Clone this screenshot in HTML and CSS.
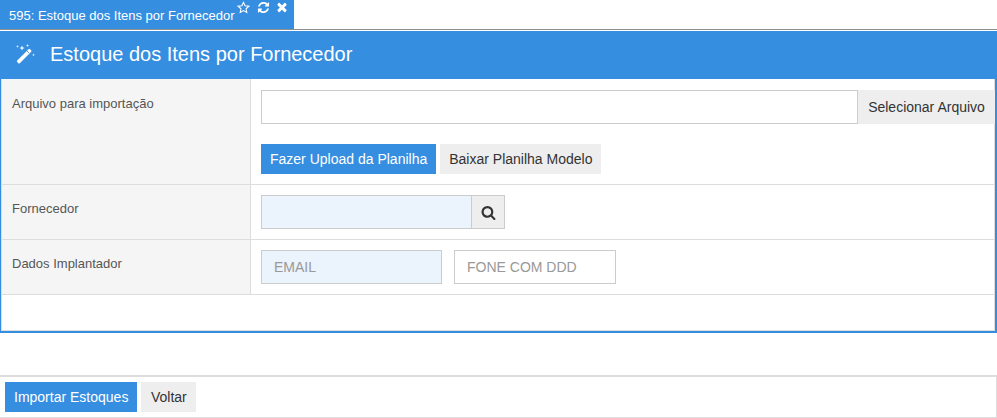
FILE: index.html

```html
<!DOCTYPE html>
<html lang="pt-BR">
<head>
<meta charset="UTF-8">
<title>Estoque dos Itens por Fornecedor</title>
<link rel="stylesheet" href="styles.css">
</head>
<body>
  <div class="tabs">
    <div class="tab">
      <span class="tab-title">595: Estoque dos Itens por Fornecedor</span>
      <svg class="tab-icon star" viewBox="0 0 24 24"><polygon points="12,2.5 14.9,8.9 21.8,9.7 16.7,14.4 18.1,21.3 12,17.8 5.9,21.3 7.3,14.4 2.2,9.7 9.1,8.9"/></svg>
      <svg class="tab-icon" viewBox="0 0 1792 1792"><path d="M1639 1056q0 5-1 7-64 268-268 434.5t-478 166.5q-146 0-282.5-55t-243.5-157l-129 129q-19 19-45 19t-45-19-19-45v-448q0-26 19-45t45-19h448q26 0 45 19t19 45-19 45l-137 137q71 66 161 102t187 36q134 0 250-65t186-179q11-17 53-117 8-23 30-23h192q13 0 22.5 9.5t9.5 22.5zm25-800v448q0 26-19 45t-45 19h-448q-26 0-45-19t-19-45 19-45l138-138q-148-137-349-137-134 0-250 65t-186 179q-11 17-53 117-8 23-30 23h-199q-13 0-22.5-9.5t-9.5-22.5v-7q65-268 270-434.5t480-166.5q146 0 284 55.5t245 156.5l130-129q19-19 45-19t45 19 19 45z"/></svg>
      <svg class="tab-icon close" viewBox="0 0 1408 1792"><path d="M1298 1322q0 40-28 68l-136 136q-28 28-68 28t-68-28l-294-294-294 294q-28 28-68 28t-68-28l-136-136q-28-28-28-68t28-68l294-294-294-294q-28-28-28-68t28-68l136-136q28-28 68-28t68 28l294 294 294-294q28-28 68-28t68 28l136 136q28 28 28 68t-28 68l-294 294 294 294q28 28 28 68z"/></svg>
    </div>
  </div>

  <div class="panel">
    <div class="panel-head">
      <svg class="wand" viewBox="0 0 20 20">
        <path d="M1.2 16.6 12.6 5.2a1 1 0 0 1 1.4 0l1.2 1.2a1 1 0 0 1 0 1.4L3.8 19.2a1 1 0 0 1-1.4 0l-1.2-1.2a1 1 0 0 1 0-1.4z"/>
        <path class="notch" d="M11.2 7.2l1.6 1.6"/>
        <path d="M6 1.5l.7 1.8 1.8.7-1.8.7L6 6.5l-.7-1.8-1.8-.7 1.8-.7zM11.5 0l.4 1.1 1.1.4-1.1.4-.4 1.1-.4-1.1-1.1-.4 1.1-.4zM1.5 1l.4 1 1 .4-1 .4-.4 1-.4-1-1-.4 1-.4zM17.5 9.5l.4 1 1 .4-1 .4-.4 1-.4-1-1-.4 1-.4z"/>
      </svg>
      <h1 class="panel-title">Estoque dos Itens por Fornecedor</h1>
    </div>

    <div class="row row-file">
      <div class="label">Arquivo para importação</div>
      <div class="field">
        <div class="file-line">
          <input class="input file-input" type="text">
          <button class="btn btn-file">Selecionar Arquivo</button>
        </div>
        <div class="btn-line">
          <button class="btn btn-blue">Fazer Upload da Planilha</button>
          <button class="btn">Baixar Planilha Modelo</button>
        </div>
      </div>
    </div>

    <div class="row">
      <div class="label">Fornecedor</div>
      <div class="field">
        <div class="search-line">
          <input class="input input-req supplier" type="text">
          <button class="search-btn">
            <svg viewBox="0 0 1792 1792"><path d="M1216 832q0-185-131.5-316.5t-316.5-131.5-316.5 131.5-131.5 316.5 131.5 316.5 316.5 131.5 316.5-131.5 131.5-316.5zm512 832q0 52-38 90t-90 38q-54 0-90-38l-343-342q-179 124-399 124-143 0-273.5-55.5t-225-150-150-225-55.5-273.5 55.5-273.5 150-225 225-150 273.5-55.5 273.5 55.5 225 150 150 225 55.5 273.5q0 220-124 399l343 343q37 37 37 90z"/></svg>
          </button>
        </div>
      </div>
    </div>

    <div class="row">
      <div class="label">Dados Implantador</div>
      <div class="field contact">
        <input class="input input-req email" type="text" placeholder="EMAIL">
        <input class="input phone" type="text" placeholder="FONE COM DDD">
      </div>
    </div>
  </div>

  <div class="footer">
    <button class="btn btn-blue">Importar Estoques</button>
    <button class="btn btn-back">Voltar</button>
  </div>
</body>
</html>
```

FILE: styles.css

```css
* {
  box-sizing: border-box;
}

body {
  margin: 0;
  background: #fff;
  color: #333;
  font-family: "Liberation Sans", Arial, sans-serif;
  font-size: 14px;
}

.tabs {
  height: 30px;
  border-bottom: 1px solid #8f8f8f;
}

.tab {
  display: flex;
  align-items: flex-start;
  width: 294px;
  height: 29px;
  padding-left: 9px;
  background: #368ee0;
  color: #fff;
}

.tab-title {
  margin-top: 8px;
  font-size: 13px;
  line-height: 15px;
}

.tab-icon {
  width: 13px;
  height: 13px;
  margin: 1px 0 0 7px;
  fill: #fff;
}

.tab-icon.star {
  margin-left: 3px;
  fill: none;
  stroke: #fff;
  stroke-width: 2;
}

.tab-icon.close {
  width: 14px;
  height: 14px;
  margin: 0 0 0 5px;
}

.panel {
  margin-top: 1px;
  height: 302px;
  border: 2px solid #368ee0;
  border-top: 0;
  border-left-width: 1px;
  box-shadow: inset 1px 0 0 #ddd, inset -1px 0 0 #ddd, inset 0 -1px 0 #ddd;
}

.panel-head {
  display: flex;
  align-items: center;
  height: 48px;
  margin: 0 -2px 0 -1px;
  padding: 0 0 2px 16px;
  background: #368ee0;
  color: #fff;
}

.wand {
  width: 20px;
  height: 20px;
  fill: #fff;
}

.wand .notch {
  fill: none;
  stroke: #368ee0;
  stroke-width: 1;
}

.panel-title {
  margin: 0 0 0 14px;
  font-size: 20px;
  font-weight: normal;
  line-height: 24px;
}

.row {
  display: flex;
  height: 55px;
  margin: 0 1px;
  border-bottom: 1px solid #ddd;
}

.row-file {
  height: 106px;
}

.label {
  width: 249px;
  padding: 15px 0 0 10px;
  background: #f5f5f5;
  border-right: 1px solid #ddd;
  color: #555;
  font-size: 13px;
  line-height: 17px;
}

.row-file .label {
  padding-top: 16px;
}

.field {
  flex: 1;
  padding: 10px 0 0 10px;
}

.row-file .field {
  padding-top: 11px;
}

.input {
  display: block;
  height: 34px;
  padding: 0 12px;
  border: 1px solid #ccc;
  border-radius: 0;
  background: #fff;
  font: 14px "Liberation Sans", Arial, sans-serif;
  outline: 0;
}

.input::placeholder {
  color: #999;
  opacity: 1;
}

.input-req {
  background: #ebf3fd;
}

.btn {
  height: 30px;
  padding: 0 9px;
  border: 0;
  background: #eee;
  color: #333;
  font: 14px "Liberation Sans", Arial, sans-serif;
}

.btn-blue {
  background: #368ee0;
  color: #fff;
}

.btn-back {
  width: 55px;
}

.file-line {
  display: flex;
}

.file-input {
  flex: 1;
}

.btn-file {
  width: 137px;
  height: 34px;
  margin-right: -1px;
  padding: 0;
}

.btn-line {
  display: flex;
  gap: 4px;
  margin-top: 20px;
}

.search-line {
  display: flex;
}

.supplier {
  width: 210px;
  border-right: 0;
}

.search-btn {
  display: flex;
  align-items: center;
  justify-content: center;
  width: 34px;
  height: 34px;
  padding: 0;
  border: 1px solid #ccc;
  background: #eee;
}

.search-btn svg {
  width: 15px;
  height: 15px;
  fill: #333;
}

.contact {
  display: flex;
  gap: 12px;
}

.email {
  width: 181px;
}

.phone {
  width: 162px;
}

.footer {
  display: flex;
  gap: 4px;
  height: 43px;
  margin-top: 42px;
  padding: 5px 5px 0;
  border-top: 2px solid #ddd;
  border-bottom: 1px solid #ddd;
  border-right: 1px solid #ddd;
}
```
